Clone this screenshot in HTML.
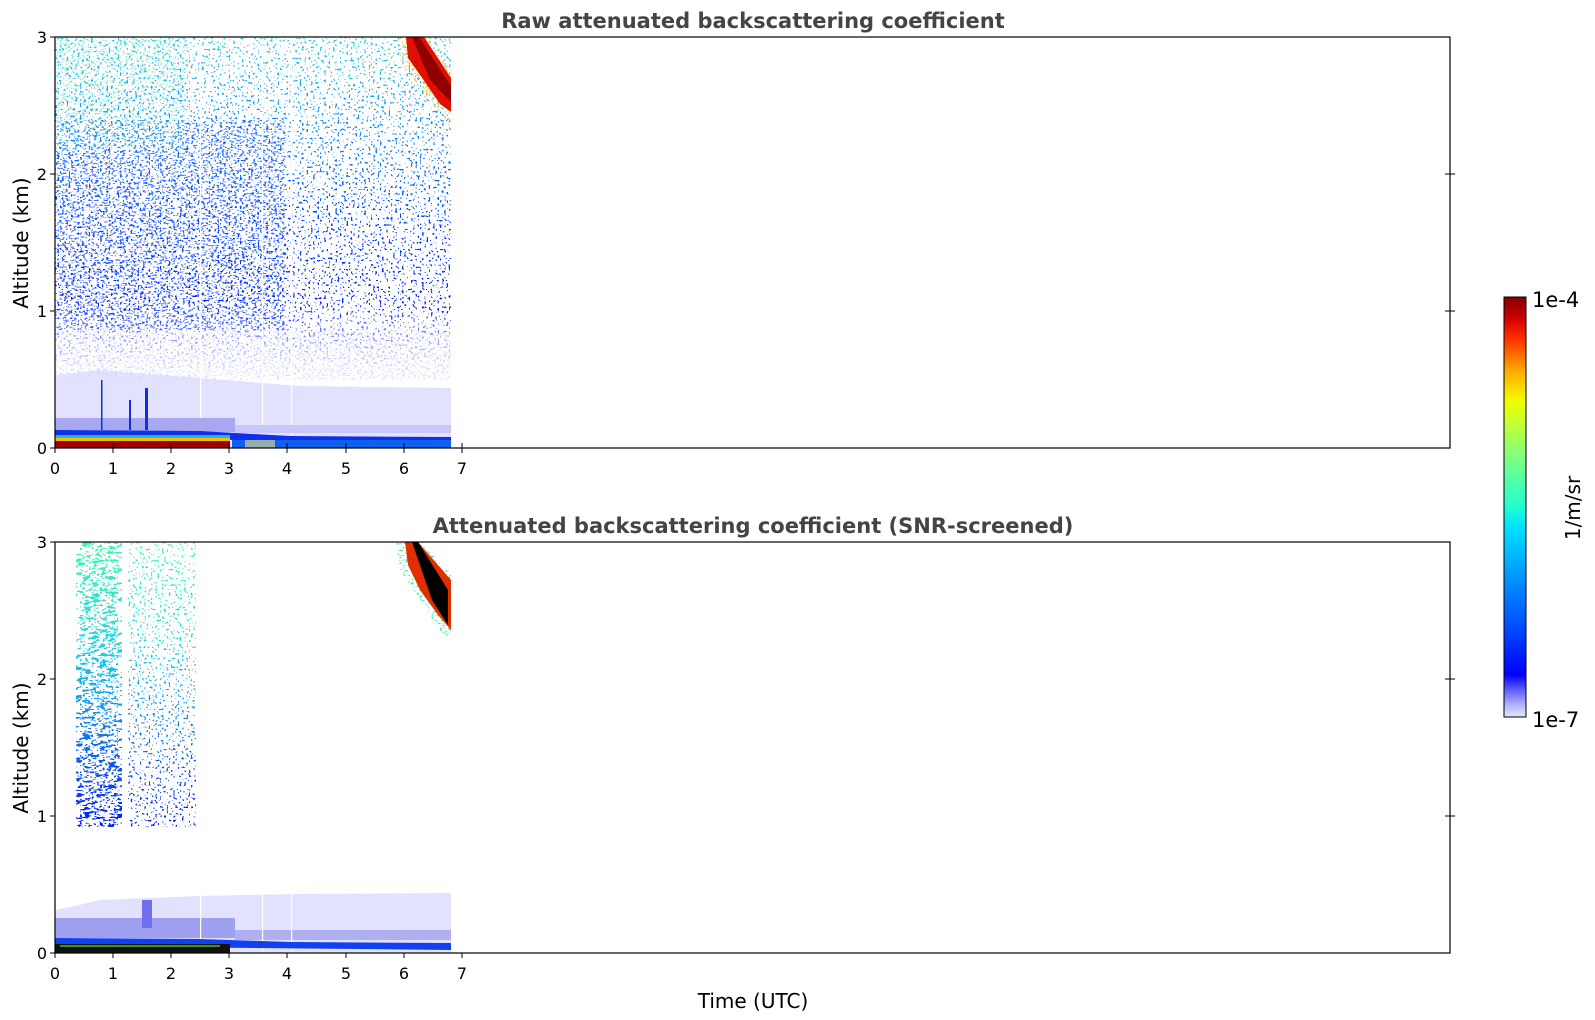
<!DOCTYPE html>
<html><head><meta charset="utf-8"><style>
html,body{margin:0;padding:0;background:#fff;}
svg{display:block;font-family:"DejaVu Sans","Liberation Sans",sans-serif;}
</style></head><body>
<svg width="1595" height="1020" viewBox="0 0 1595 1020" xmlns="http://www.w3.org/2000/svg">
<defs>
<filter id="sp" filterUnits="userSpaceOnUse" x="0" y="0" width="1595" height="1020">
 <feTurbulence type="fractalNoise" baseFrequency="0.45" numOctaves="1" seed="4" result="n"/>
 <feColorMatrix in="n" type="matrix" values="0 0 0 0 0  0 0 0 0 0  0 0 0 0 0  1.6 0 0 0 -0.3" result="m"/>
 <feComponentTransfer in="m" result="t"><feFuncA type="discrete" tableValues="0 0 0 0 0 1 1"/></feComponentTransfer>
 <feComposite in="SourceGraphic" in2="t" operator="in"/>
</filter>
<filter id="sp2" filterUnits="userSpaceOnUse" x="0" y="0" width="1595" height="1020">
 <feTurbulence type="fractalNoise" baseFrequency="0.35 0.6" numOctaves="1" seed="9" result="n"/>
 <feColorMatrix in="n" type="matrix" values="0 0 0 0 0  0 0 0 0 0  0 0 0 0 0  1.6 0 0 0 -0.3" result="m"/>
 <feComponentTransfer in="m" result="t"><feFuncA type="discrete" tableValues="0 0 0 0 1 1"/></feComponentTransfer>
 <feComposite in="SourceGraphic" in2="t" operator="in"/>
</filter>
<filter id="blob" filterUnits="userSpaceOnUse" x="0" y="0" width="1595" height="1020">
 <feTurbulence type="fractalNoise" baseFrequency="0.12 0.35" numOctaves="2" seed="2" result="n"/>
 <feColorMatrix in="n" type="matrix" values="0 0 0 0 0  0 0 0 0 0  0 0 0 0 0  1.6 0 0 0 -0.3" result="m"/>
 <feComponentTransfer in="m" result="t"><feFuncA type="discrete" tableValues="0 0 0 0 1 1"/></feComponentTransfer>
 <feComposite in="SourceGraphic" in2="t" operator="in"/>
</filter>
<linearGradient id="topv" x1="0" y1="37" x2="0" y2="380" gradientUnits="userSpaceOnUse">
 <stop offset="0" stop-color="#30d0e0"/><stop offset="0.25" stop-color="#1090ff"/>
 <stop offset="0.5" stop-color="#0050ff"/><stop offset="0.78" stop-color="#0020ff"/>
 <stop offset="0.88" stop-color="#4050ff" stop-opacity="0.6"/><stop offset="1" stop-color="#c0c0ff" stop-opacity="0.2"/>
</linearGradient>
<linearGradient id="cb" x1="0" y1="1" x2="0" y2="0">
 <stop offset="0" stop-color="#e6e6ff"/><stop offset="0.03" stop-color="#b0b0ff"/><stop offset="0.07" stop-color="#5050ff"/>
 <stop offset="0.1" stop-color="#0000ff"/><stop offset="0.22" stop-color="#0050ff"/><stop offset="0.35" stop-color="#00a0ff"/>
 <stop offset="0.45" stop-color="#00e0ff"/><stop offset="0.5" stop-color="#20ffd0"/><stop offset="0.62" stop-color="#80ff80"/>
 <stop offset="0.75" stop-color="#f0ff00"/><stop offset="0.82" stop-color="#ffb000"/><stop offset="0.9" stop-color="#ff3000"/>
 <stop offset="0.95" stop-color="#d00000"/><stop offset="1" stop-color="#800000"/>
</linearGradient>
<linearGradient id="colv" x1="0" y1="542" x2="0" y2="827" gradientUnits="userSpaceOnUse">
 <stop offset="0" stop-color="#40f8b0"/><stop offset="0.35" stop-color="#20d8e0"/><stop offset="0.55" stop-color="#10a0f0"/>
 <stop offset="0.8" stop-color="#1050f0"/><stop offset="1" stop-color="#0020ff"/>
</linearGradient>
</defs>

<g>
 <path d="M55 375 L100 370 L200 378 L300 386 L451 388 L451 448 L55 448 Z" fill="#e2e2ff"/>
 <rect x="55" y="330" width="396" height="50" fill="#e2e2ff" filter="url(#sp2)"/>
 <rect x="55" y="37" width="396" height="343" fill="url(#topv)" filter="url(#sp)"/>
 <rect x="55" y="120" width="230" height="210" fill="#1040ff" opacity="0.7" filter="url(#sp2)"/>
 <rect x="55" y="40" width="130" height="110" fill="#40e0c0" opacity="0.5" filter="url(#sp2)"/>
 <rect x="200" y="37" width="1.2" height="411" fill="#fff"/>
 <rect x="262" y="37" width="1.2" height="411" fill="#fff"/>
 <rect x="291" y="37" width="1.2" height="411" fill="#fff"/>
 <rect x="55" y="418" width="180" height="14" fill="#a8a8f0"/>
 <rect x="235" y="425" width="216" height="8" fill="#c8c8f8"/>
 <path d="M55 430 L200 431 L235 433 L290 436 L451 437 L451 442 L235 440 L55 437 Z" fill="#1030e8"/>
 <rect x="55" y="435" width="175" height="4" fill="#20b8f0"/>
 <rect x="55" y="438" width="175" height="3" fill="#f0c000"/>
 <rect x="55" y="441" width="175" height="7" fill="#a00000"/>
 <rect x="232" y="440" width="219" height="8" fill="#1060f0"/>
 <rect x="245" y="440" width="30" height="8" fill="#f0e080" opacity="0.6"/>
 <rect x="101" y="380" width="1.5" height="50" fill="#1030e0"/>
 <rect x="129" y="400" width="2" height="30" fill="#1030e0"/>
 <rect x="145" y="388" width="3" height="42" fill="#1030e0"/>
 <path d="M398 37 L430 37 L451 68 L451 125 L436 110 L418 85 L400 62 Z" fill="#ffc000" opacity="0.8" filter="url(#sp2)"/>
 <path d="M406 37 L424 37 L451 78 L451 112 L440 104 L425 82 L408 58 Z" fill="#e01000"/>
 <path d="M412 37 L419 37 L451 86 L451 102 L430 80 Z" fill="#900000"/>
</g>
<rect x="55" y="37" width="1395" height="411" fill="none" stroke="#000" stroke-width="1.2"/>

<g>
 <path d="M55 910 L75 906 L100 900 L200 896 L300 894 L451 893 L451 953 L55 953 Z" fill="#e2e2ff"/>
 <rect x="55" y="918" width="180" height="20" fill="#a0a0f0"/>
 <rect x="142" y="900" width="10" height="28" fill="#7070ee"/>
 <rect x="235" y="930" width="216" height="10" fill="#b0b0f0"/>
 <rect x="200" y="890" width="1.2" height="63" fill="#fff"/>
 <rect x="262" y="890" width="1.2" height="63" fill="#fff"/>
 <rect x="291" y="890" width="1.2" height="63" fill="#fff"/>
 <path d="M55 938 L200 939 L290 942 L451 943 L451 950 L55 946 Z" fill="#1040f0"/>
 <rect x="55" y="944" width="175" height="9" fill="#101010"/>
 <rect x="60" y="945" width="160" height="2" fill="#40d040" opacity="0.7"/>
 <rect x="76" y="542" width="46" height="285" fill="url(#colv)" filter="url(#blob)"/>
 <rect x="80" y="542" width="38" height="285" fill="url(#colv)" filter="url(#sp2)"/>
 <rect x="128" y="542" width="68" height="285" fill="url(#colv)" filter="url(#sp)"/>
 <path d="M396 542 L420 542 L451 575 L451 640 L440 630 L420 600 L400 570 Z" fill="#40f0b0" filter="url(#sp2)"/>
 <path d="M405 542 L418 542 L451 580 L451 630 L438 615 L420 590 L408 565 Z" fill="#e03000"/>
 <path d="M412 542 L418 542 L448 590 L448 625 L432 600 Z" fill="#000"/>
</g>
<rect x="55" y="542" width="1395" height="411" fill="none" stroke="#000" stroke-width="1.2"/>

<g stroke="#000" stroke-width="1">
 <path d="M55 448v-5M113 448v-5M171 448v-5M229 448v-5M287 448v-5M346 448v-5M404 448v-5M462 448v-5"/>
 <path d="M55 448v5M113 448v5M171 448v5M229 448v5M287 448v5M346 448v5M404 448v5M462 448v5"/>
 <path d="M55 953v5M113 953v5M171 953v5M229 953v5M287 953v5M346 953v5M404 953v5M462 953v5"/>
 <path d="M50 448h5M50 311h5M50 174h5M50 37h5M1450 311h-5M1450 174h-5M1450 311h5M1450 174h5"/>
 <path d="M50 953h5M50 816h5M50 679h5M50 542h5M1450 816h-5M1450 679h-5M1450 816h5M1450 679h5"/>
</g>
<g font-size="16" fill="#000" text-anchor="middle">
 <text x="55" y="474">0</text><text x="113" y="474">1</text><text x="171" y="474">2</text><text x="229" y="474">3</text>
 <text x="287" y="474">4</text><text x="346" y="474">5</text><text x="404" y="474">6</text><text x="462" y="474">7</text>
 <text x="55" y="979">0</text><text x="113" y="979">1</text><text x="171" y="979">2</text><text x="229" y="979">3</text>
 <text x="287" y="979">4</text><text x="346" y="979">5</text><text x="404" y="979">6</text><text x="462" y="979">7</text>
</g>
<g font-size="16" fill="#000" text-anchor="end">
 <text x="47" y="454">0</text><text x="47" y="317">1</text><text x="47" y="180">2</text><text x="47" y="43">3</text>
 <text x="47" y="959">0</text><text x="47" y="822">1</text><text x="47" y="685">2</text><text x="47" y="548">3</text>
</g>
<g font-size="21" font-weight="bold" fill="#444" text-anchor="middle">
 <text x="753" y="28">Raw attenuated backscattering coefficient</text>
 <text x="753" y="533">Attenuated backscattering coefficient (SNR-screened)</text>
</g>
<g font-size="20" fill="#000" text-anchor="middle">
 <text transform="translate(28,243) rotate(-90)">Altitude (km)</text>
 <text transform="translate(28,748) rotate(-90)">Altitude (km)</text>
 <text x="753" y="1008">Time (UTC)</text>
 <text transform="translate(1580,508) rotate(-90)">1/m/sr</text>
</g>
<rect x="1504" y="297" width="22" height="420" fill="url(#cb)" stroke="#000" stroke-width="1"/>
<g font-size="21" fill="#000">
 <text x="1532" y="307">1e-4</text>
 <text x="1532" y="727">1e-7</text>
</g>
</svg>
</body></html>
